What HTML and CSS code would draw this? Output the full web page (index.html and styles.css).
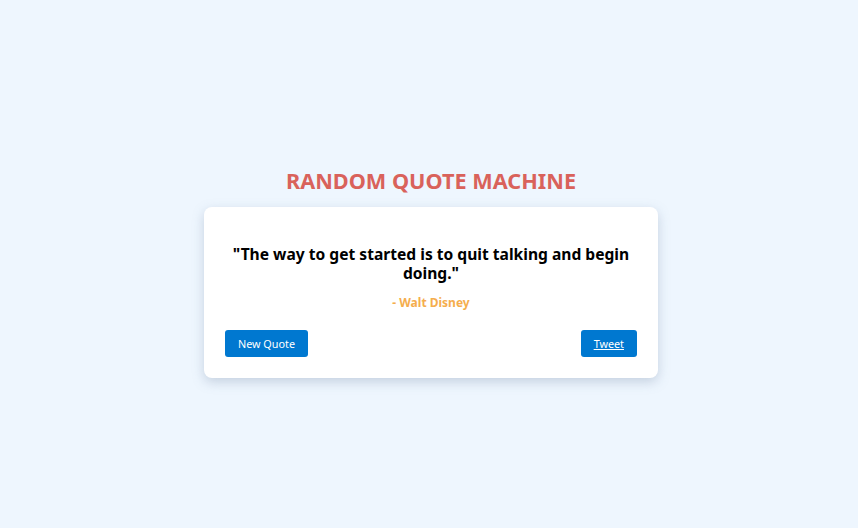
FILE: index.html
```html
<!DOCTYPE html>
<html lang="en">
<head>
<meta charset="utf-8">
<title>Random Quote Machine</title>
<link rel="stylesheet" href="styles.css">
</head>
<body>
<main class="page">
  <h1 class="title">RANDOM QUOTE MACHINE</h1>
  <section class="card" id="quote-box">
    <p class="quote" id="text">"The way to get started is to quit talking and begin doing."</p>
    <p class="author" id="author">- Walt Disney</p>
    <div class="actions">
      <button class="btn" id="new-quote">New Quote</button>
      <a class="btn tweet" id="tweet-quote" href="#">Tweet</a>
    </div>
  </section>
</main>
</body>
</html>
```
FILE: styles.css
```css
* { box-sizing: border-box; }
html, body { margin: 0; height: 100%; }
body {
  background: #eef6fe;
  font-family: "Noto Sans", "Open Sans", sans-serif;
}
.page {
  height: 100%;
  display: flex;
  flex-direction: column;
  align-items: center;
  justify-content: center;
  padding-top: 14px;
  padding-left: 4px;
}
.title {
  margin: 0 0 10px;
  font-size: 21.7px;
  line-height: 32px;
  font-weight: 700;
  color: #d9625b;
}
.card {
  width: 454px;
  background: #fff;
  border-radius: 8px;
  box-shadow: 0 4px 12px rgba(120, 140, 170, 0.35);
  padding: 38px 21px 21px;
}
.quote {
  margin: 0;
  text-align: center;
  font-size: 15.6px;
  line-height: 19px;
  font-weight: 700;
  color: #000;
}
.author {
  margin: 12px 0 19px;
  text-align: center;
  font-size: 12px;
  line-height: 16px;
  font-weight: 700;
  color: #f5ad4d;
}
.actions {
  display: flex;
  justify-content: space-between;
  align-items: center;
}
.btn {
  display: inline-flex;
  align-items: center;
  justify-content: center;
  height: 27px;
  padding: 0 13px;
  border: none;
  border-radius: 3px;
  background: #0078d0;
  color: #fff;
  font-family: inherit;
  font-size: 10.8px;
  cursor: pointer;
  text-decoration: none;
}
.tweet {
  text-decoration: underline;
}
```
